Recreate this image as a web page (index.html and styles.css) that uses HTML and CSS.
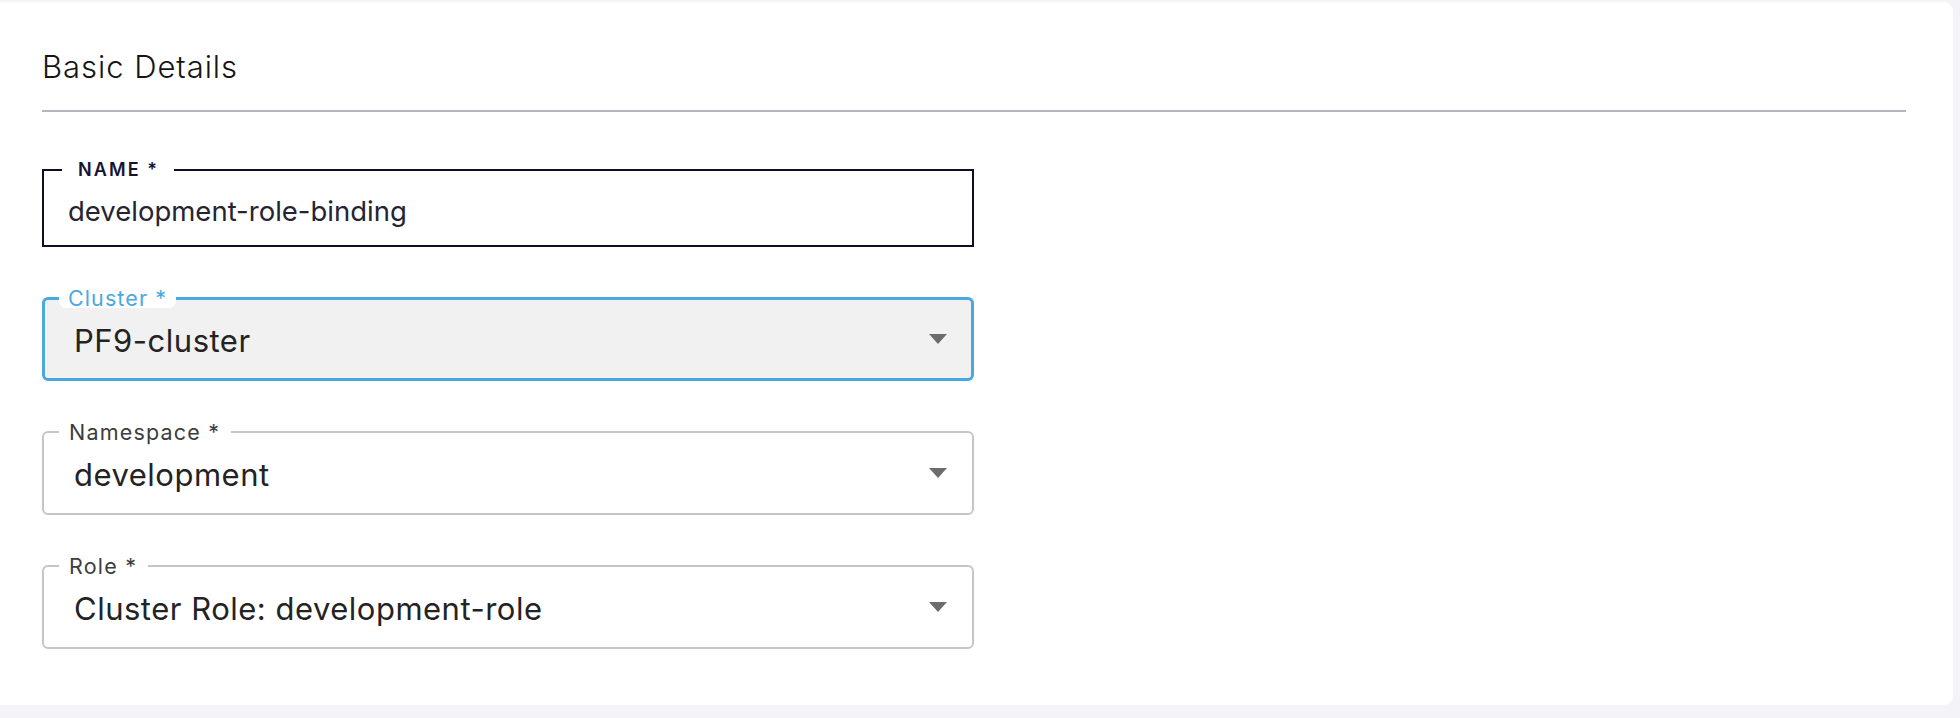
FILE: index.html
```html
<!DOCTYPE html>
<html lang="en">
<head>
<meta charset="utf-8">
<title>Basic Details</title>
<link rel="stylesheet" href="styles.css">
</head>
<body>
<main class="card">
  <h2 class="card-title">Basic Details</h2>
  <div class="divider"></div>

  <div class="form">
    <div class="text-field">
      <label class="field-label field-label--name">NAME *</label>
      <span class="field-value field-value--text">development-role-binding</span>
    </div>

    <div class="select select--focused">
      <label class="field-label field-label--focused">Cluster *</label>
      <span class="field-value">PF9-cluster</span>
      <svg class="caret" width="18" height="10" viewBox="0 0 18 10"><polygon points="0,0 18,0 9,10" /></svg>
    </div>

    <div class="select">
      <label class="field-label">Namespace *</label>
      <span class="field-value">development</span>
      <svg class="caret" width="18" height="10" viewBox="0 0 18 10"><polygon points="0,0 18,0 9,10" /></svg>
    </div>

    <div class="select">
      <label class="field-label">Role *</label>
      <span class="field-value">Cluster Role: development-role</span>
      <svg class="caret" width="18" height="10" viewBox="0 0 18 10"><polygon points="0,0 18,0 9,10" /></svg>
    </div>
  </div>
</main>
</body>
</html>
```

FILE: styles.css
```css
* {
  box-sizing: border-box;
}

html, body {
  margin: 0;
  padding: 0;
}

body {
  width: 1960px;
  height: 718px;
  overflow: hidden;
  background: #f3f3f8;
  font-family: Inter, "Noto Sans", sans-serif;
  padding: 2px 7px 13px 0;
}

.card {
  height: 703px;
  background: #ffffff;
  border-radius: 0 9px 9px 0;
  padding: 46px 47px 0 42px;
}

.card-title {
  margin: 0;
  font-size: 31px;
  line-height: 38px;
  font-weight: 300;
  color: #151515;
  letter-spacing: 0.95px;
}

.divider {
  margin-top: 24px;
  height: 2px;
  background: #b6b6bf;
}

.form {
  width: 932px;
  margin-top: 57px;
  display: flex;
  flex-direction: column;
  gap: 50px;
}

.text-field {
  position: relative;
  height: 78px;
  border: 2px solid #0f0d26;
  padding: 0 22px 0 24px;
  display: flex;
  align-items: center;
}

.select {
  position: relative;
  height: 84px;
  border: 2px solid #c6c6c6;
  border-radius: 6px;
  padding: 0 25px 0 30px;
  display: flex;
  align-items: center;
}

.select--focused {
  border: 3px solid #4aa8e1;
  background: #f1f1f1;
  padding: 0 24px 0 29px;
}

.field-value {
  font-size: 31px;
  line-height: 40px;
  letter-spacing: 0.5px;
  color: #232323;
  margin-top: 4px;
}

.field-value--text {
  font-size: 27.5px;
  line-height: 36px;
  letter-spacing: 0;
  color: #242433;
  margin-top: 6px;
}

.caret {
  margin-left: auto;
  fill: #6c6c6c;
}

.field-label {
  position: absolute;
  top: -10px;
  left: 15px;
  padding: 0 11px 0 10px;
  background: #ffffff;
  font-size: 21.5px;
  line-height: 19px;
  letter-spacing: 1.2px;
  color: #3d3d3d;
}

.field-label--focused {
  top: -11px;
  left: 14px;
  color: #4aa8e1;
  border-radius: 0 0 7px 7px;
  padding: 0 9px 0 9px;
  letter-spacing: 1.1px;
}

.field-label--name {
  top: -11px;
  left: 18px;
  padding: 0 15px 0 16px;
  font-size: 18px;
  font-weight: 600;
  letter-spacing: 2.1px;
  color: #141432;
}
```
